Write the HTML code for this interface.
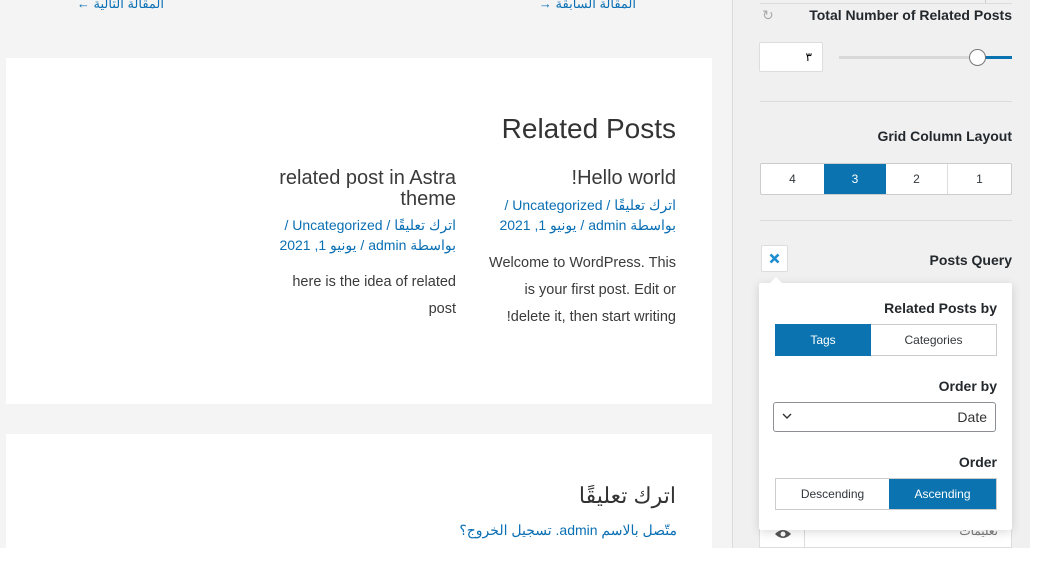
<!DOCTYPE html>
<html><head><meta charset="utf-8"><style>
*{box-sizing:border-box;margin:0;padding:0}
body{width:1044px;height:572px;overflow:hidden;background:#fff;font-family:"Liberation Sans","Noto Sans CJK SC",sans-serif;position:relative}
.abs{position:absolute}
.main{left:0;top:0;width:732px;height:548px;background:#f4f4f4}
.card{background:#fff}
a,.lk{color:#0a6fb3;text-decoration:none}
.r{text-align:right;direction:ltr}
.rtl{direction:rtl;text-align:right}
.sb{left:732px;top:0;width:298px;height:548px;background:#f0f0f1;border-left:1px solid #dcdcde}
.lbl{font-weight:bold;color:#23282d;font-family:"Liberation Sans",sans-serif;font-size:14px}
.btn{position:absolute;display:flex;align-items:center;justify-content:center;font-size:12px;color:#32373c}
</style></head><body>
<div class="abs main"></div>
<div class="abs lk rtl" style="left:60px;top:-4px;width:104px;font-size:13px">المقالة التالية ←</div>
<div class="abs lk rtl" style="left:530px;top:-4px;width:106px;font-size:13px">المقالة السابقة →</div>
<div class="abs card" style="left:6px;top:58px;width:706px;height:346px"></div>
<div class="abs" style="left:420px;top:113px;width:256px;font-size:28px;color:#333;text-align:right">Related Posts</div>
<div class="abs r" style="left:480px;top:167px;width:196px;font-size:20px;color:#3a3a3a">!Hello world</div>
<div class="abs rtl lk" style="left:480px;top:195px;width:196px;font-size:14px;line-height:20px">اترك تعليقًا / Uncategorized /<br>بواسطة admin / يونيو 1, 2021</div>
<div class="abs r" style="left:470px;top:250px;width:206px;font-size:14.5px;line-height:27px;color:#3a3a3a">Welcome to WordPress. This<br>is your first post. Edit or<br>!delete it, then start writing</div>
<div class="abs r" style="left:256px;top:168px;width:200px;font-size:20px;line-height:21px;color:#3a3a3a">related post in Astra<br>theme</div>
<div class="abs rtl lk" style="left:256px;top:215px;width:200px;font-size:14px;line-height:20px">اترك تعليقًا / Uncategorized /<br>بواسطة admin / يونيو 1, 2021</div>
<div class="abs r" style="left:256px;top:269px;width:200px;font-size:14.5px;line-height:27px;color:#3a3a3a">here is the idea of related<br>post</div>
<div class="abs card" style="left:6px;top:434px;width:706px;height:114px"></div>
<div class="abs rtl" style="left:476px;top:483px;width:200px;font-size:22px;color:#333">اترك تعليقًا</div>
<div class="abs rtl lk" style="left:420px;top:522px;width:257px;font-size:14px">متّصل بالاسم admin. تسجيل الخروج؟</div>
<div class="abs" style="left:732px;top:202px;width:6px;height:226px;background:#d4d4d4;border-radius:3px"></div>
<div class="abs sb"></div>
<div class="abs" style="left:985px;top:0;width:1px;height:4px;background:#ccc"></div>
<div class="abs" style="left:760px;top:3px;width:252px;height:1px;background:#dcdcde"></div>
<div class="abs" style="left:762px;top:7px;font-size:14px;color:#aaa">↻</div>
<div class="abs lbl" style="left:780px;top:7px;width:232px;text-align:right;white-space:nowrap">Total Number of Related Posts</div>
<div class="abs" style="left:759px;top:42px;width:64px;height:30px;background:#fff;border:1px solid #ddd;border-radius:2px;font-size:12px;text-align:right;padding:7px 10px 0 0">٣</div>
<div class="abs" style="left:839px;top:56px;width:136px;height:3px;background:#d8d8d8"></div>
<div class="abs" style="left:985px;top:56px;width:27px;height:3px;background:#0a73b0"></div>
<div class="abs" style="left:969px;top:49px;width:17px;height:17px;border-radius:50%;background:#fff;border:1px solid #777"></div>
<div class="abs" style="left:760px;top:101px;width:252px;height:1px;background:#dcdcde"></div>
<div class="abs lbl" style="left:790px;top:128px;width:222px;text-align:right">Grid Column Layout</div>
<div class="abs" style="left:760px;top:163px;width:252px;height:32px;background:#fff;border:1px solid #ccc;border-radius:2px"></div>
<div class="btn" style="left:761px;top:164px;width:63px;height:30px">4</div>
<div class="btn" style="left:824px;top:164px;width:62px;height:30px;background:#0a73b0;color:#fff">3</div>
<div class="btn" style="left:886px;top:164px;width:62px;height:30px;border-right:1px solid #ddd">2</div>
<div class="btn" style="left:948px;top:164px;width:63px;height:30px">1</div>
<div class="abs" style="left:760px;top:220px;width:252px;height:1px;background:#dcdcde"></div>
<div class="abs" style="left:761px;top:245px;width:27px;height:27px;background:#fff;border:1px solid #ddd;border-radius:2px"><svg width="25" height="25" viewBox="0 0 25 25"><path d="M8.5 8.5l8 8M16.5 8.5l-8 8" stroke="#1e8cd0" stroke-width="2.6"/></svg></div>
<div class="abs lbl" style="left:860px;top:252px;width:152px;text-align:right">Posts Query</div>
<div class="abs" style="left:759px;top:520px;width:253px;height:28px;background:#fff;border:1px solid #ddd"></div>
<svg class="abs" style="left:774px;top:528px" width="18" height="12" viewBox="0 0 18 12"><path d="M1 6Q9 -2 17 6Q9 14 1 6Z" fill="#555"/><circle cx="9" cy="6" r="2.5" fill="#fff"/></svg>
<div class="abs" style="left:804px;top:520px;width:1px;height:28px;background:#ddd"></div>
<div class="abs" style="left:900px;top:524px;width:98px;text-align:right;font-size:12px;color:#777">تعليمات</div>
<div class="abs" style="left:759px;top:283px;width:253px;height:247px;background:#fff;box-shadow:0 2px 10px rgba(0,0,0,.15);border-radius:2px"></div>
<div class="abs" style="left:769px;top:277px;width:0;height:0;border-left:7px solid transparent;border-right:7px solid transparent;border-bottom:7px solid #fff"></div>
<div class="abs lbl" style="left:800px;top:300px;width:197px;text-align:right">Related Posts by</div>
<div class="abs" style="left:775px;top:324px;width:222px;height:32px;border:1px solid #ccc;background:#fff"></div>
<div class="btn" style="left:775px;top:324px;width:96px;height:32px;background:#0a73b0;color:#fff">Tags</div>
<div class="btn" style="left:871px;top:324px;width:125px;height:32px">Categories</div>
<div class="abs lbl" style="left:800px;top:378px;width:197px;text-align:right">Order by</div>
<div class="abs" style="left:773px;top:402px;width:223px;height:30px;border:1px solid #8c8f94;border-radius:3px;background:#fff"></div>
<svg class="abs" style="left:782px;top:413px" width="10" height="7" viewBox="0 0 10 7"><path d="M1 1l4 4 4-4" stroke="#333" stroke-width="1.4" fill="none"/></svg>
<div class="abs" style="left:900px;top:409px;width:87px;text-align:right;font-size:14px;color:#333">Date</div>
<div class="abs lbl" style="left:800px;top:454px;width:197px;text-align:right">Order</div>
<div class="abs" style="left:775px;top:478px;width:222px;height:32px;border:1px solid #ccc;background:#fff"></div>
<div class="btn" style="left:776px;top:479px;width:113px;height:30px">Descending</div>
<div class="btn" style="left:889px;top:479px;width:107px;height:30px;background:#0a73b0;color:#fff">Ascending</div>
</body></html>
